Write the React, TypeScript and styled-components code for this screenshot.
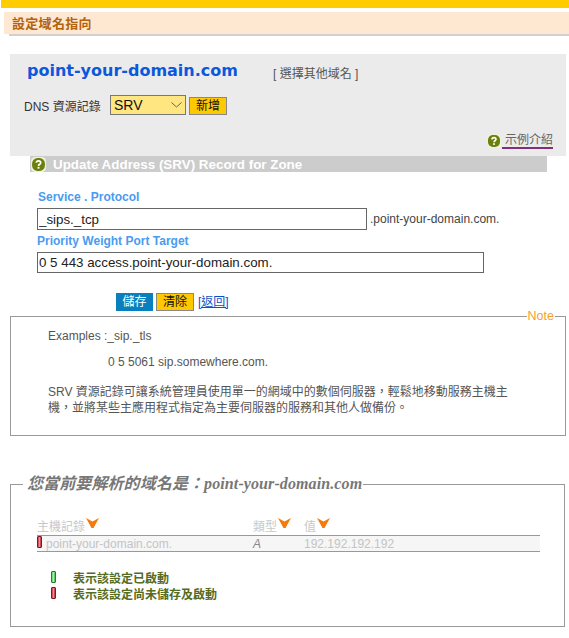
import React from "react";
import styled, { createGlobalStyle } from "styled-components";

const GlobalStyle = createGlobalStyle`
  html, body {
    margin: 0;
    padding: 0;
    background: #fff;
  }
  body {
    font-family: "Liberation Sans", Arial, "Noto Sans CJK TC", sans-serif;
    font-size: 12px;
    color: #333;
    overflow: hidden;
  }
`;

const Page = styled.div`
  width: 569px;
  height: 638px;
  overflow: hidden;
`;

const TopBar = styled.div`
  height: 8px;
  margin-left: 1px;
  background: #ffcc00;
`;

const TitleBar = styled.div`
  height: 22px;
  margin: 4px 0 0 4px;
  padding-left: 8px;
  background: #ffe8d1;
  box-shadow: 5px 2px 0 #d0d0d0;
  color: #b3630e;
  font-size: 13px;
  font-weight: bold;
  letter-spacing: 0.3px;
  line-height: 23px;
`;

const DomainPanel = styled.div`
  box-sizing: border-box;
  width: 556px;
  height: 102px;
  margin: 20px 0 0 10px;
  padding: 7px 13px 0 14px;
  background: #ebebeb;
`;

const DomainRow = styled.div`
  display: flex;
  align-items: center;
  height: 20px;
  margin-left: 3px;
`;

const DomainName = styled.span`
  font-family: "DejaVu Sans", Verdana, sans-serif;
  font-size: 16px;
  font-weight: bold;
  line-height: 20px;
  color: #0b58dc;
`;

const OtherDomain = styled.span`
  margin: 2px 0 0 35px;
  font-size: 12px;
  color: #555;
`;

const RecordRow = styled.div`
  display: flex;
  align-items: center;
  margin-top: 14px;
  height: 20px;
`;

const RecordLabel = styled.span`
  width: 86px;
  font-size: 12px;
  color: #333;
`;

const SelectWrap = styled.span`
  position: relative;
  display: block;
  width: 76px;
  height: 20px;
`;

const TypeSelect = styled.select`
  display: block;
  box-sizing: border-box;
  width: 76px;
  height: 20px;
  padding: 0 0 0 3px;
  appearance: none;
  background: #ffe680;
  border: 1px solid #777;
  border-radius: 0;
  font-family: inherit;
  font-size: 14px;
  color: #111;
`;

const SelectArrow = styled.svg`
  position: absolute;
  top: 7px;
  right: 4px;
  pointer-events: none;
`;

const Button = styled.button<{ $variant: "yellow" | "blue" }>`
  box-sizing: border-box;
  width: 38px;
  height: 18px;
  padding: 0;
  background: ${(p) => (p.$variant === "blue" ? "#0a7fbd" : "#ffc800")};
  border: 1px solid ${(p) => (p.$variant === "blue" ? "#0a7fbd" : "#888")};
  border-radius: 0;
  color: ${(p) => (p.$variant === "blue" ? "#fff" : "#111")};
  font-family: inherit;
  font-size: 12px;
  line-height: 16px;
`;

const AddButton = styled(Button)`
  margin: 2px 0 0 3px;
`;

const SaveButton = styled(Button)`
  width: 37px;
`;

const HelpRow = styled.div`
  display: flex;
  justify-content: flex-end;
  align-items: center;
  gap: 1px;
  margin-top: 18px;
  height: 16px;
`;

const HelpLink = styled.a`
  display: block;
  padding-left: 3px;
  font-size: 12px;
  line-height: 13px;
  color: #666;
  border-bottom: 2px solid #80307a;
`;

const SectionHead = styled.div`
  display: flex;
  align-items: center;
  box-sizing: border-box;
  width: 517px;
  height: 16px;
  margin-left: 30px;
  padding-left: 1px;
  background: #cccccc;
  color: #fff;
  font-size: 13.4px;
  font-weight: bold;
`;

const SectionTitle = styled.span`
  margin-left: 7px;
`;

const RecordForm = styled.form`
  padding: 18px 0 0 37px;
  height: 143px;
  box-sizing: border-box;
`;

const FieldLabel = styled.div<{ $indent?: number }>`
  height: 14px;
  margin-left: ${(p) => p.$indent ?? 0}px;
  color: #4a9bef;
  font-size: 12px;
  font-weight: bold;
  line-height: 14px;
`;

const InputRow = styled.div`
  display: flex;
  align-items: center;
  margin: 4px 0 4px;
`;

const TextInput = styled.input<{ $width: number; $height: number }>`
  box-sizing: border-box;
  width: ${(p) => p.$width}px;
  height: ${(p) => p.$height}px;
  padding: 0 2px 0 1px;
  border: 1px solid #666;
  border-radius: 0;
  outline: none;
  background: #fff;
  color: #222;
  font-family: inherit;
  font-size: 13.33px;
`;

const ZoneSuffix = styled.span`
  margin-left: 3px;
  font-size: 12px;
  color: #444;
`;

const FormActions = styled.div`
  display: flex;
  align-items: center;
  gap: 3px;
  margin: 19px 0 0 79px;
`;

const BackLink = styled.a`
  margin: 0 0 2px 1px;
  color: #0a50c8;
  font-size: 12px;
  text-decoration: underline;
`;

const Box = styled.fieldset`
  box-sizing: border-box;
  margin: 0 0 0 10px;
  padding: 0;
  border: 1px solid #999;
  min-width: 0;
`;

const NoteBox = styled(Box)`
  width: 556px;
  height: 127px;
  margin-top: -6px;
  padding: 6px 0 0 37px;
  color: #555;
`;

const NoteLegend = styled.legend`
  margin-left: auto;
  margin-right: 10px;
  padding: 0 1px;
  color: #f5a02c;
  font-size: 12.5px;
  line-height: 14px;
`;

const ExampleKey = styled.div`
  line-height: 14px;
`;

const ExampleValue = styled.div`
  margin: 12px 0 0 60px;
  line-height: 14px;
`;

const NoteText = styled.p`
  width: 470px;
  margin: 15px 0 0;
  line-height: 16px;
`;

const ZoneBox = styled(Box)`
  width: 555px;
  height: 152px;
  margin-top: 39px;
  padding: 25px 0 0 26px;
`;

const ZoneLegend = styled.legend`
  margin-left: -14px;
  padding: 0 1px 0 4px;
  color: #777;
  font-family: "Liberation Serif", "Noto Sans CJK TC", serif;
  font-size: 16px;
  font-style: italic;
  font-weight: bold;
  letter-spacing: 0.1px;
  line-height: 18px;
`;

const Columns = "216px 51px 1fr";

const ZoneHead = styled.div`
  display: grid;
  grid-template-columns: ${Columns};
  width: 503px;
  height: 17px;
  color: #c8c8c8;
  font-size: 12px;
  line-height: 19px;
`;

const HeadCell = styled.span`
  display: flex;
  align-items: flex-start;
  gap: 1px;
`;

const ZoneRow = styled.div`
  display: grid;
  grid-template-columns: ${Columns};
  box-sizing: border-box;
  width: 503px;
  height: 17px;
  background: #f6f6f6;
  border-top: 1px solid #999;
  border-bottom: 1px solid #999;
  color: #c4c4c4;
  font-size: 12px;
  line-height: 16px;
`;

const HostCell = styled.span`
  display: flex;
  align-items: flex-start;
  gap: 4px;
`;

const TypeCell = styled.span`
  color: #888;
  font-style: italic;
`;

const Legends = styled.div`
  margin: 19px 0 0 14px;
`;

const LegendRow = styled.div`
  display: flex;
  align-items: flex-start;
  height: 16px;
  color: #556b1e;
  font-size: 12px;
  font-weight: bold;
  line-height: 16px;
`;

const LegendText = styled.span`
  margin-left: 17px;
`;

const Led = styled.i<{ $on?: boolean }>`
  display: block;
  box-sizing: border-box;
  width: 5px;
  height: 12px;
  border: 1px solid ${(p) => (p.$on ? "#2a7a2a" : "#7a1a22")};
  border-radius: 1px;
  background: ${(p) =>
    p.$on
      ? "linear-gradient(90deg, #5fd36a, #a8f0a8 50%, #3fb04a)"
      : "linear-gradient(90deg, #c23a48, #ef8a90 50%, #b02a38)"};
`;

const HelpIcon = ({ size = 14 }: { size?: number }) => (
  <svg width={size} height={size} viewBox="0 0 14 14" style={{ flex: "none" }}>
    <rect x="0" y="0" width="14" height="14" rx="4" fill="#eef3d8" />
    <rect x="1" y="1" width="12" height="12" rx="5" fill="#6b7f0c" />
    <path
      d="M5 5.4C5 4.2 5.9 3.6 7 3.6s2 .7 2 1.7c0 1.5-2 1.4-2 3"
      fill="none"
      stroke="#fff"
      strokeWidth="1.6"
    />
    <rect x="6.1" y="9.2" width="1.8" height="1.7" fill="#fff" />
  </svg>
);

const SortArrow = () => (
  <svg width="13" height="10" viewBox="0 0 13 10" style={{ flex: "none" }}>
    <path d="M0 0L6.5 3.5L13 0L7.5 10H5.5Z" fill="#f57a0c" />
  </svg>
);

export default function App() {
  return (
    <Page>
      <GlobalStyle />
      <TopBar />
      <TitleBar>設定域名指向</TitleBar>

      <DomainPanel>
        <DomainRow>
          <DomainName>point-your-domain.com</DomainName>
          <OtherDomain>[ 選擇其他域名 ]</OtherDomain>
        </DomainRow>
        <RecordRow>
          <RecordLabel>DNS 資源記錄</RecordLabel>
          <SelectWrap>
            <TypeSelect defaultValue="SRV">
              <option>A</option>
              <option>CNAME</option>
              <option>MX</option>
              <option>SRV</option>
            </TypeSelect>
            <SelectArrow width="11" height="6" viewBox="0 0 11 6">
              <path d="M0.5 0.5L5.5 5L10.5 0.5" fill="none" stroke="#666" strokeWidth="1" />
            </SelectArrow>
          </SelectWrap>
          <AddButton type="button" $variant="yellow">新增</AddButton>
        </RecordRow>
        <HelpRow>
          <HelpIcon />
          <HelpLink>示例介紹</HelpLink>
        </HelpRow>
      </DomainPanel>

      <SectionHead>
        <HelpIcon size={15} />
        <SectionTitle>Update Address (SRV) Record for Zone</SectionTitle>
      </SectionHead>

      <RecordForm>
        <FieldLabel $indent={1}>Service . Protocol</FieldLabel>
        <InputRow>
          <TextInput $width={330} $height={22} defaultValue="_sips._tcp" />
          <ZoneSuffix>.point-your-domain.com.</ZoneSuffix>
        </InputRow>
        <FieldLabel>Priority Weight Port Target</FieldLabel>
        <InputRow>
          <TextInput $width={447} $height={21} defaultValue="0 5 443 access.point-your-domain.com." />
        </InputRow>
        <FormActions>
          <SaveButton type="button" $variant="blue">儲存</SaveButton>
          <Button type="button" $variant="yellow">清除</Button>
          <BackLink>[返回]</BackLink>
        </FormActions>
      </RecordForm>

      <NoteBox>
        <NoteLegend>Note</NoteLegend>
        <ExampleKey>Examples :_sip._tls</ExampleKey>
        <ExampleValue>0 5 5061 sip.somewhere.com.</ExampleValue>
        <NoteText>
          SRV 資源記錄可讓系統管理員使用單一的網域中的數個伺服器，輕鬆地移動服務主機主機，並將某些主應用程式指定為主要伺服器的服務和其他人做備份。
        </NoteText>
      </NoteBox>

      <ZoneBox>
        <ZoneLegend>您當前要解析的域名是：point-your-domain.com</ZoneLegend>
        <ZoneHead>
          <HeadCell>主機記錄<SortArrow /></HeadCell>
          <HeadCell>類型<SortArrow /></HeadCell>
          <HeadCell>值<SortArrow /></HeadCell>
        </ZoneHead>
        <ZoneRow>
          <HostCell><Led />point-your-domain.com.</HostCell>
          <TypeCell>A</TypeCell>
          <span>192.192.192.192</span>
        </ZoneRow>
        <Legends>
          <LegendRow><Led $on /><LegendText>表示該設定已啟動</LegendText></LegendRow>
          <LegendRow><Led /><LegendText>表示該設定尚未儲存及啟動</LegendText></LegendRow>
        </Legends>
      </ZoneBox>
    </Page>
  );
}
